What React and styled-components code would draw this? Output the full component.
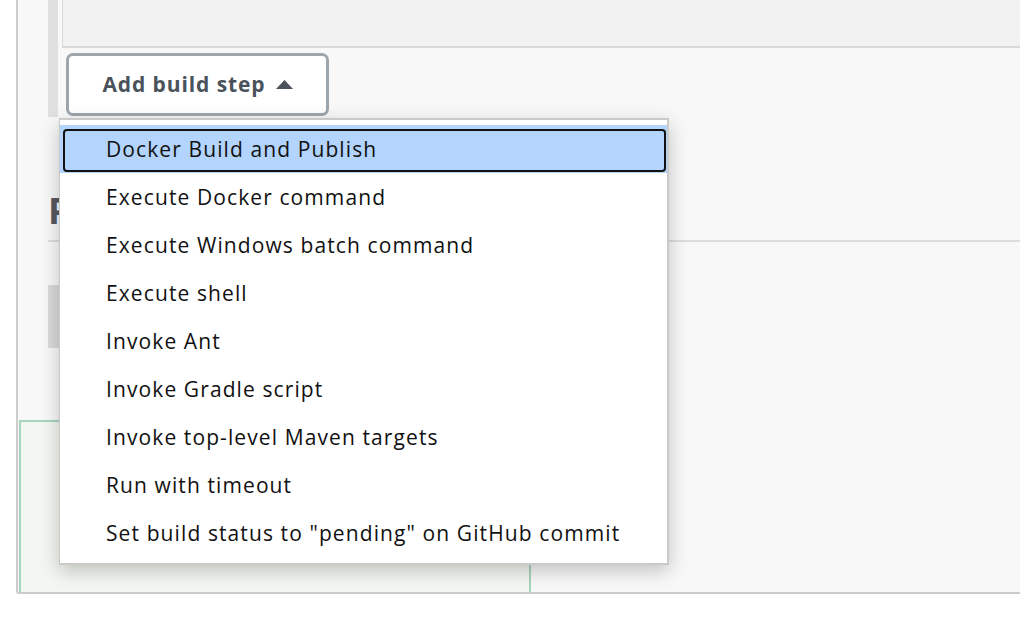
import React from 'react';
import styled, { createGlobalStyle } from 'styled-components';

const GlobalStyle = createGlobalStyle`
  html, body {
    margin: 0;
    padding: 0;
    background: #fff;
    overflow: hidden;
  }
  body {
    font-family: "Open Sans", "Noto Sans", "DejaVu Sans", sans-serif;
  }
`

const Page = styled.div`
  width: 1020px;
  height: 634px;
  padding-left: 16px;
  box-sizing: border-box;
`

const Panel = styled.div`
  height: 594px;
  box-sizing: border-box;
  border-left: 2px solid #cccccc;
  border-bottom: 2px solid #cccccc;
  border-bottom-left-radius: 3px;
  background: #f8f8f8;
  display: flex;
  flex-direction: column;
`

const BuildSection = styled.div`
  display: flex;
  margin-left: 30px;
`

const SideBar = styled.div`
  width: 10px;
  flex-shrink: 0;
  background: #e0e0e0;
`

const SectionBody = styled.div`
  flex: 1;
  padding-left: 4px;
  padding-bottom: 1px;
`

const ConfigBox = styled.div`
  height: 48px;
  box-sizing: border-box;
  background: #f2f2f2;
  border-left: 1px solid #d9d9d9;
  border-bottom: 2px solid #d9d9d9;
`

const ButtonRow = styled.div`
  padding: 5px 0 0 4px;
`

const DropButton = styled.button`
  position: relative;
  width: 263px;
  height: 63px;
  box-sizing: border-box;
  border: 3px solid #9da6ad;
  border-radius: 7px;
  background: #fff;
  color: #4a525b;
  font-family: "Open Sans", "Noto Sans", sans-serif;
  font-weight: 700;
  font-size: 21px;
  letter-spacing: 0.9px;
  display: flex;
  align-items: center;
  justify-content: center;
  gap: 10px;
  padding: 0 0 2px 0;
  cursor: pointer;
`

const Caret = styled.svg`
  width: 17px;
  height: 9px;
  margin-top: 2px;
`

const Heading = styled.h2`
  margin: 72px 0 0 30px;
  padding-bottom: 7px;
  font-size: 36px;
  line-height: 44px;
  font-weight: 700;
  color: #555a60;
  border-bottom: 2px solid #dddddd;
`

// the "add post-build action" button, hidden behind the open menu
const GreyButton = styled.div`
  margin: 43px 0 0 30px;
  width: 263px;
  height: 63px;
  background: #dadada;
`

const SaveBar = styled.div`
  margin-top: auto;
  margin-left: 1px;
  width: 512px;
  height: 172px;
  box-sizing: border-box;
  border: 2px solid #a8d4be;
  border-bottom: none;
  background: #f3f7f1;
`

const Menu = styled.ul`
  position: absolute;
  top: 62px;
  left: -10px;
  z-index: 10;
  width: 610px;
  margin: 0;
  padding: 5px 0 6px;
  box-sizing: border-box;
  list-style: none;
  background: #fff;
  border: 2px solid #cacaca;
  border-left-width: 1px;
  box-shadow: 0 6px 18px rgba(0, 0, 0, 0.22);
  text-align: left;
`

const MenuItem = styled.li`
  position: relative;
  height: 48px;
  padding-left: 46px;
  display: flex;
  align-items: center;
  font-family: "Open Sans", "Noto Sans", sans-serif;
  font-weight: 400;
  font-size: 21px;
  letter-spacing: 1.1px;
  color: #111;
  white-space: nowrap;
  background: ${p => (p.$active ? '#b3d4fc' : 'transparent')};

  ${p => p.$active && `
    &::after {
      content: '';
      position: absolute;
      top: 4px;
      left: 3px;
      right: 1px;
      bottom: 1px;
      border: 2px solid #111;
      border-radius: 4px;
    }
  `}
`

const steps = [
  'Docker Build and Publish',
  'Execute Docker command',
  'Execute Windows batch command',
  'Execute shell',
  'Invoke Ant',
  'Invoke Gradle script',
  'Invoke top-level Maven targets',
  'Run with timeout',
  'Set build status to "pending" on GitHub commit',
]

const App = () => {
  return (
    <Page>
      <GlobalStyle />
      <Panel>
        <BuildSection>
          <SideBar />
          <SectionBody>
            <ConfigBox />
            <ButtonRow>
              <DropButton>
                Add build step
                <Caret viewBox="0 0 17 9">
                  <path d="M0 9 L8.5 0 L17 9 Z" fill="#4a525b" />
                </Caret>
                <Menu>
                  {steps.map((s, i) => (
                    <MenuItem key={s} $active={i === 0}>{s}</MenuItem>
                  ))}
                </Menu>
              </DropButton>
            </ButtonRow>
          </SectionBody>
        </BuildSection>
        <Heading>P</Heading>
        <GreyButton />
        <SaveBar />
      </Panel>
    </Page>
  );
}

export default App;
